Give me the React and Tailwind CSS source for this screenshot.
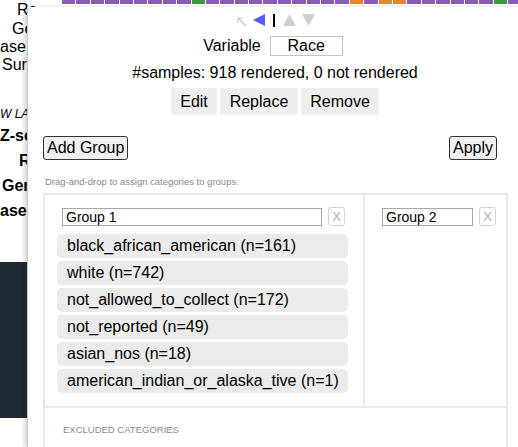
import React from 'react'

// colour strip along the top of the plot: one cell per sample group
const strip = Array.from({ length: 32 }, (_, i) => {
    if (i === 9 || i === 30) return '#3d9a3d'
    if (i === 20 || i === 22 || i === 23) return '#e6862e'
    return '#8c5cb8'
})

const categories = [
    'black_african_american (n=161)',
    'white (n=742)',
    'not_allowed_to_collect (n=172)',
    'not_reported (n=49)',
    'asian_nos (n=18)',
    'american_indian_or_alaska_tive (n=1)',
]

function Background() {
    return (
        <div className="absolute inset-0 overflow-hidden">
            <div className="absolute left-[62px] top-0 flex h-[4px]">
                {strip.map((c, i) => (
                    <div key={i} className="mr-[1px] h-full w-[13.4px]" style={{ backgroundColor: c }} />
                ))}
            </div>
            <div className="flex flex-col text-[16px] leading-[18px] text-black whitespace-nowrap">
                <div className="mt-[1px] pl-[17px]">Ra</div>
                <div className="mt-[1px] pl-[12px]">Gen</div>
                <div className="pl-0">ase t</div>
                <div className="pl-[2px]">Surv</div>
                <div className="mt-[31px] pl-0 text-[12px] italic">W LA</div>
                <div className="mt-[4px] pl-0 font-bold">Z-sc</div>
                <div className="mt-[7px] pl-[19px] font-bold">R</div>
                <div className="mt-[7px] pl-[2px] font-bold">Gen</div>
                <div className="mt-[7px] pl-0 font-bold">ase t</div>
            </div>
            <div className="absolute left-0 top-[262px] h-[156px] w-[30px] bg-[#1f2a35]" />
        </div>
    )
}

function Arrows() {
    return (
        <div className="flex h-[16px] items-center justify-center pl-[6px]">
            <svg width="10" height="10" viewBox="0 0 10 10" className="mr-[6px] mt-[3px]">
                <path d="M1 1 L9 9 M1 1 L1 6 M1 1 L6 1" stroke="#c8c8c8" strokeWidth="1.2" fill="none" />
            </svg>
            <svg width="12" height="12" viewBox="0 0 12 12" className="mr-[8px]">
                <polygon points="0,6 12,0 12,12" fill="#5b5bf5" />
            </svg>
            <div className="mr-[8px] h-[13px] w-[2px] bg-black" />
            <svg width="13" height="12" viewBox="0 0 13 12" className="mr-[6px]">
                <polygon points="6.5,0 13,12 0,12" fill="#cfcfcf" />
            </svg>
            <svg width="13" height="12" viewBox="0 0 13 12">
                <polygon points="0,0 13,0 6.5,12" fill="#cfcfcf" />
            </svg>
        </div>
    )
}

function GroupInput({ value, width }) {
    return (
        <div className="flex items-center">
            <div className={`${width} h-[18px] border border-[#a9a9a9] bg-white pl-[3px] text-[14px] leading-[16px]`}>{value}</div>
            <div className="ml-[6px] flex h-[19px] w-[17px] items-center justify-center rounded-[3px] border border-[#d4d4d4] text-[13px] text-[#b0b0b0]">X</div>
        </div>
    )
}

function Panel() {
    return (
        <div className="absolute bottom-0 left-[27px] right-0 top-[7px] border-l border-[#c9c9c9] bg-white shadow-[-3px_0_4px_rgba(0,0,0,0.15)]">
            <div className="mt-[5px]">
                <Arrows />
            </div>
            <div className="mt-[8px] flex items-center justify-center text-[16px] leading-[18px]">
                <span className="mr-[9px]">Variable</span>
                <div className="flex h-[20px] w-[73px] items-center justify-center border border-[#c4c4c4]">Race</div>
            </div>
            <div className="mt-[8px] pl-[4px] text-center text-[16px] leading-[18px]">#samples: 918 rendered, 0 not rendered</div>
            <div className="mt-[6px] flex justify-center gap-[3px] pl-[4px] text-[16px]">
                <div className="flex h-[27px] w-[46px] items-center justify-center bg-[#efefef]">Edit</div>
                <div className="flex h-[27px] w-[78px] items-center justify-center bg-[#efefef]">Replace</div>
                <div className="flex h-[27px] w-[78px] items-center justify-center bg-[#efefef]">Remove</div>
            </div>
            <div className="mt-[21px] flex justify-between pl-[15px] pr-[21px]">
                <button className="h-[24px] rounded-[3px] border border-[#333] bg-[#f0f0f0] px-[3px] text-[16px] leading-[20px]">Add Group</button>
                <button className="h-[24px] rounded-[3px] border border-[#333] bg-[#f0f0f0] px-[3px] text-[16px] leading-[20px]">Apply</button>
            </div>
            <div className="mt-[17px] pl-[17px] text-[9.5px] leading-[10px] text-[#8a8a8a]">Drag-and-drop to assign categories to groups.</div>
            <div className="ml-[15px] mt-[6px] w-[465px] border-x-2 border-t-2 border-[#e8e8e8]">
                <div className="flex h-[213px] border-b-2 border-[#e8e8e8]">
                    <div className="w-[320px] border-r-2 border-[#e8e8e8] pl-[12px] pt-[12px]">
                        <div className="pl-[5px]">
                            <GroupInput value="Group 1" width="w-[260px]" />
                        </div>
                        <div className="mt-[8px] flex flex-col gap-[3px]">
                            {categories.map((c) => (
                                <div key={c} className="flex h-[24px] w-[291px] items-center rounded-[5px] bg-[#ebebeb] pl-[10px] text-[16px] leading-[18px]">{c}</div>
                            ))}
                        </div>
                    </div>
                    <div className="flex-1 pl-[17px] pt-[12px]">
                        <GroupInput value="Group 2" width="w-[91px]" />
                    </div>
                </div>
                <div className="h-[60px] pl-[18px] pt-[15px] text-[9.5px] uppercase text-[#8a8a8a]">Excluded categories</div>
            </div>
        </div>
    )
}

export default function App() {
    return (
        <div className="relative h-[447px] w-[518px] overflow-hidden bg-white font-['Liberation_Sans',Arial,sans-serif] text-black">
            <Background />
            <Panel />
        </div>
    )
}
